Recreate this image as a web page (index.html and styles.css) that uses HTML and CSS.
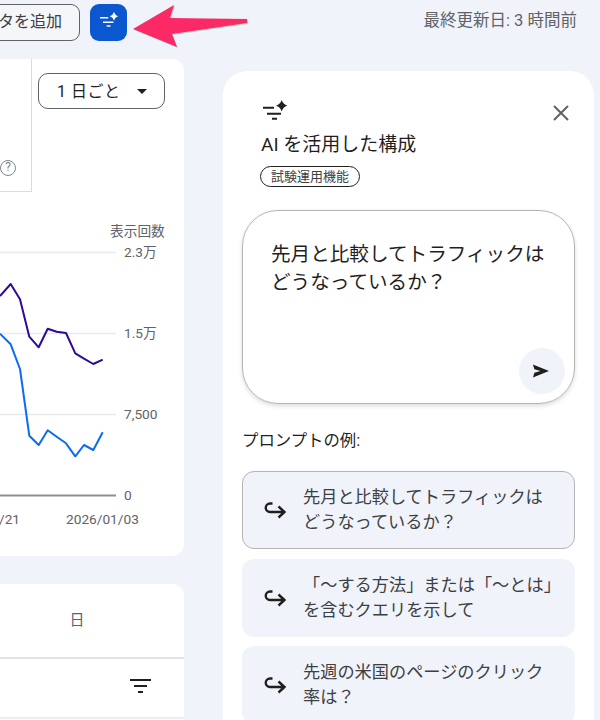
FILE: index.html
```html
<!DOCTYPE html>
<html lang="ja">
<head>
<meta charset="utf-8">
<title>AI を活用した構成</title>
<link rel="stylesheet" href="styles.css">
</head>
<body>
<div class="page">
  <header class="topbar">
    <div class="topbar-left">
      <button class="add-filter">フィルタを追加</button>
      <button class="ai-button" aria-label="AI">
        <svg class="ai-icon" viewBox="0 0 24 20"><path d="M0 7.700h11M4 13.700h14M9 18.700h5" stroke="currentColor" stroke-width="2" fill="none"/><path d="M18.700 0Q20 4.400 24.400 5.700 20 7 18.700 11.400 17.400 7 13 5.700 17.400 4.400 18.700 0z" fill="currentColor"/></svg>
      </button>
    </div>
    <span class="updated">最終更新日: 3 時間前</span>
  </header>
  <div class="main">
    <div class="left-col">
      <section class="card chart-card">
        <div class="chart-head">
          <div class="metric-box"><span class="help">?</span></div>
          <button class="period"><span class="period-text">1 日ごと</span><span class="caret"></span></button>
        </div>
        <svg class="chart" viewBox="0 0 184 318">
          <text class="axis-label" x="110" y="16">表示回数</text>
          <g class="grid">
            <path d="M0 32.500H116M0 113.500H116M0 194.500H116"/>
          </g>
          <path class="baseline" d="M0 275.500H116"/>
          <text class="axis-label" x="124" y="37">2.3万</text>
          <text class="axis-label" x="124" y="118">1.5万</text>
          <text class="axis-label" x="124" y="199">7,500</text>
          <text class="axis-label" x="124" y="280">0</text>
          <text class="axis-label" x="-1" y="304">/21</text>
          <text class="axis-label" x="66" y="304">2026/01/03</text>
          <polyline class="line-purple" points="0,76 10.700,64 20,79.300 29.300,116.700 38.700,127.300 47.700,108.700 56.700,111.700 66,113 75.300,133.300 84,138.700 93.300,144 102.700,139.700"/>
          <polyline class="line-blue" points="0,113.700 10.700,124.300 20,149 29.300,215.700 38.700,225 47.700,210.300 56.700,216.700 66,223.300 75.300,236.300 84,225 93.300,230 102.700,212.300"/>
        </svg>
      </section>
      <section class="card table-card">
        <div class="tabs"><span class="tab">日</span></div>
        <div class="filter-row">
          <svg class="filter-icon" viewBox="0 0 21 14"><path d="M0 1h21M4 7h13M8 13h5" stroke="currentColor" stroke-width="2" fill="none"/></svg>
        </div>
      </section>
    </div>
    <aside class="panel">
      <div class="panel-head">
        <div class="panel-title">
          <svg class="panel-icon" viewBox="0 0 25 20"><path d="M0 7.700h11M4 13.700h14M9 18.700h5" stroke="currentColor" stroke-width="2" fill="none"/><path d="M18.700 0Q20 4.400 24.400 5.700 20 7 18.700 11.400 17.400 7 13 5.700 17.400 4.400 18.700 0z" fill="currentColor"/></svg>
          <h2 class="title">AI を活用した構成</h2>
          <span class="chip">試験運用機能</span>
        </div>
        <svg class="close" viewBox="0 0 16 16"><path d="M1 1l14 14M15 1L1 15" stroke="currentColor" stroke-width="2" fill="none"/></svg>
      </div>
      <div class="prompt-box">
        <p class="prompt-text">先月と比較してトラフィックはどうなっているか？</p>
        <button class="send" aria-label="送信">
          <svg viewBox="0 0 18 14" class="send-icon"><path d="M1 0l17 7-17 7 1.500-5.200L9 7 2.500 5.200z" fill="currentColor"/></svg>
        </button>
      </div>
      <p class="examples-label">プロンプトの例:</p>
      <div class="examples">
        <div class="example outlined">
          <svg class="reply" viewBox="0 0 22 20"><path d="M8.500 3.500H6a4.250 4.250 0 0 0 0 8.500H20M14.500 6.500L20.500 12l-6 5.500" stroke="currentColor" stroke-width="2.400" fill="none"/></svg>
          <span class="example-text">先月と比較してトラフィックはどうなっているか？</span>
        </div>
        <div class="example">
          <svg class="reply" viewBox="0 0 22 20"><path d="M8.500 3.500H6a4.250 4.250 0 0 0 0 8.500H20M14.500 6.500L20.500 12l-6 5.500" stroke="currentColor" stroke-width="2.400" fill="none"/></svg>
          <span class="example-text">「〜する方法」または「〜とは」を含むクエリを示して</span>
        </div>
        <div class="example">
          <svg class="reply" viewBox="0 0 22 20"><path d="M8.500 3.500H6a4.250 4.250 0 0 0 0 8.500H20M14.500 6.500L20.500 12l-6 5.500" stroke="currentColor" stroke-width="2.400" fill="none"/></svg>
          <span class="example-text">先週の米国のページのクリック率は？</span>
        </div>
      </div>
    </aside>
  </div>
  <svg class="pointer" viewBox="0 0 120 46"><polygon points="1,25 42,1 38,14 115,15 115,19 40,30 45,43" fill="#fb2a67"/></svg>
</div>
</body>
</html>
```
FILE: styles.css
```css
* { box-sizing: border-box; }
html, body { margin: 0; padding: 0; }
body {
  width: 600px;
  height: 720px;
  overflow: hidden;
  background: #f0f3f9;
  font-family: "Roboto", "Noto Sans CJK JP", sans-serif;
  color: #1f1f1f;
}
.page { position: relative; width: 600px; height: 720px; overflow: hidden; }
button { font-family: inherit; }

.topbar {
  display: flex;
  justify-content: space-between;
  align-items: flex-start;
  height: 59px;
  padding: 4px 23px 0 0;
}
.topbar-left { display: flex; justify-content: flex-end; gap: 10px; width: 127px; }
.add-filter {
  flex: none;
  height: 37px;
  padding: 0 17px 5px;
  background: #f4f6fa;
  border: 1px solid #5f6368;
  border-radius: 9px;
  font-size: 16px;
  color: #3c4043;
  white-space: nowrap;
}
.ai-button {
  flex: none;
  display: flex;
  align-items: center;
  justify-content: center;
  width: 37px;
  height: 37px;
  padding: 0;
  background: #0b57d0;
  border: none;
  border-radius: 9px;
  color: #fff;
}
.ai-icon { width: 18px; height: 15px; margin: 0 0 7px 1px; }
.updated { margin-top: 7px; font-size: 16.500px; line-height: 20px; color: #5f6368; }

.main { display: flex; align-items: flex-start; }
.left-col { flex: none; width: 184px; display: flex; flex-direction: column; gap: 28px; }
.card { background: #fff; }
.chart-card { height: 497px; border-radius: 0 12px 12px 0; }
.chart-head { display: flex; align-items: flex-start; height: 133px; }
.metric-box {
  flex: none;
  display: flex;
  justify-content: flex-end;
  align-items: flex-end;
  width: 32px;
  height: 133px;
  padding: 0 15px 15px 0;
  border-right: 1px solid #dadce0;
  border-bottom: 1px solid #dadce0;
}
.help {
  flex: none;
  width: 16px;
  height: 16px;
  border: 1.500px solid #80868b;
  border-radius: 50%;
  font-size: 12px;
  line-height: 13px;
  text-align: center;
  color: #80868b;
}
.period {
  flex: none;
  display: flex;
  align-items: center;
  justify-content: space-between;
  width: 127px;
  height: 36px;
  margin: 14px 0 0 6px;
  padding: 0 17px 0 18px;
  background: #fff;
  border: 1px solid #5f6368;
  border-radius: 10px;
  font-size: 16px;
  letter-spacing: 0.500px;
  color: #1f1f1f;
}
.period-text { margin-bottom: 3px; }
.caret {
  width: 0;
  height: 0;
  border-left: 5px solid transparent;
  border-right: 5px solid transparent;
  border-top: 5px solid #1f1f1f;
}
.chart { display: block; width: 184px; height: 318px; margin-top: 28px; }
.axis-label { font-size: 13.700px; fill: #5f6368; }
.grid path { stroke: #e8eaed; stroke-width: 1.500; fill: none; }
.baseline { stroke: #8f8f8f; stroke-width: 2; fill: none; }
.line-purple, .line-blue { fill: none; stroke-width: 2; stroke-linejoin: round; }
.line-purple { stroke: #2e0a96; }
.line-blue { stroke: #0b6bf5; }

.table-card { height: 140px; border-radius: 0 12px 0 0; }
.tabs {
  display: flex;
  justify-content: center;
  height: 75px;
  padding: 26px 0 0 0;
  border-bottom: 2px solid #e3e3e3;
}
.tab { margin-left: -30px; font-size: 15px; line-height: 20px; color: #5f6368; }
.filter-row {
  display: flex;
  justify-content: flex-end;
  height: 60px;
  padding: 20px 33px 0 0;
  border-bottom: 2px solid #eceef1;
}
.filter-icon { width: 21px; height: 14px; color: #1f1f1f; }

.panel {
  flex: none;
  width: 371px;
  height: 700px;
  margin: 12px 0 0 39px;
  padding: 29px 19px 0;
  background: #fff;
  border-radius: 24px 24px 0 0;
}
.panel-head {
  display: flex;
  justify-content: space-between;
  align-items: flex-start;
  height: 110px;
  padding: 0 6px 0 18px;
}
.panel-title { display: flex; flex-direction: column; align-items: flex-start; }
.panel-icon { width: 25px; height: 20px; margin: 0 0 0 3px; }
.title {
  margin: 13px 0 0 1px;
  font-size: 19px;
  line-height: 24px;
  font-weight: 400;
  color: #1f1f1f;
}
.chip {
  margin-top: 9px;
  padding: 0 10px;
  height: 21px;
  border: 1px solid #1f1f1f;
  border-radius: 11px;
  font-size: 13px;
  line-height: 19px;
  color: #3c4043;
}
.close { width: 16px; height: 16px; margin-top: 5px; color: #5f6368; }
.prompt-box {
  position: relative;
  width: 333px;
  height: 194px;
  padding: 30px 28px 0;
  border: 1px solid #b4b4b4;
  border-radius: 36px;
  box-shadow: 0 2px 4px rgba(60, 64, 67, 0.180);
}
.prompt-text { margin: 0; font-size: 19.600px; line-height: 28px; color: #1f1f1f; }
.send {
  position: absolute;
  right: 9px;
  bottom: 9px;
  display: flex;
  align-items: center;
  justify-content: center;
  width: 46px;
  height: 46px;
  padding: 0 3px 0 0;
  background: #f0f3f9;
  border: none;
  border-radius: 50%;
  color: #1f1f1f;
}
.send-icon { width: 17px; height: 14px; }
.examples-label { margin: 26px 0 0; font-size: 16.400px; line-height: 22px; color: #1f1f1f; }
.examples { display: flex; flex-direction: column; gap: 9px; margin-top: 19px; }
.example {
  display: flex;
  align-items: center;
  gap: 17px;
  width: 333px;
  height: 78px;
  padding: 0 22px;
  background: #f0f3f9;
  border-radius: 12px;
}
.outlined { border: 1px solid #b4b4b4; padding-left: 21px; margin-bottom: 1px; }
.reply { flex: none; width: 22px; height: 20px; color: #1f1f1f; }
.example-text { font-size: 17.200px; line-height: 25.500px; color: #3c4043; }

.pointer {
  position: absolute;
  left: 132px;
  top: 4px;
  width: 120px;
  height: 46px;
  filter: drop-shadow(1px 1px 0 rgba(120, 200, 180, 0.600));
}
```
